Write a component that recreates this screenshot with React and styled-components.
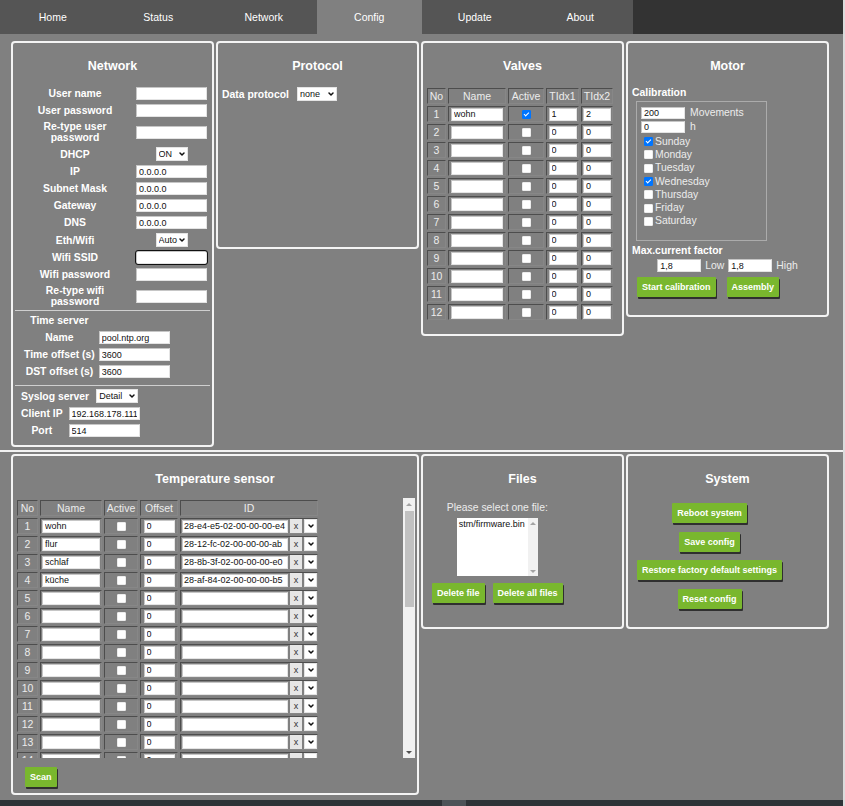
import React from 'react';
import styled, { createGlobalStyle, css } from 'styled-components';
import { ChevronDown } from 'lucide-react';

const GlobalStyle = createGlobalStyle`
  html, body {
    margin: 0;
    padding: 0;
    background: #808080;
  }
  body {
    font-family: "Liberation Sans", Arial, sans-serif;
    color: #fff;
    overflow: hidden;
  }
  *, *::before, *::after {
    box-sizing: border-box;
  }
`;

/* ---------- frame ---------- */

const Frame = styled.div`
  display: flex;
  width: 845px;
  height: 806px;
`;

const Main = styled.div`
  flex: 1;
  min-width: 0;
  display: flex;
  flex-direction: column;
`;

const EdgeLine = styled.div`
  width: 2px;
  background: #dcdcdc;
`;

const NavBar = styled.nav`
  display: flex;
  height: 34px;
  flex: none;
  background: #333;
`;

const Tab = styled.a`
  width: 105.5px;
  display: flex;
  align-items: center;
  justify-content: center;
  background: ${p => (p.$active ? '#808080' : '#555')};
  color: #fff;
  font-size: 10.5px;
  text-decoration: none;
`;

const Content = styled.main`
  flex: 1;
  padding-top: 7px;
  background: #808080;
  overflow: hidden;
`;

const PanelRow = styled.div`
  display: flex;
  align-items: flex-start;
  gap: 2px;
  padding-left: 11px;
`;

const Divider = styled.hr`
  border: 0;
  height: 2px;
  margin: 3px 0 2px;
  background: #f2f2f2;
`;

const BottomBar = styled.div`
  height: 6px;
  flex: none;
  padding-left: 442px;
  background: #2e3337;
`;

const BarThumb = styled.div`
  width: 24px;
  height: 100%;
  background: #4d5358;
`;

/* ---------- panels ---------- */

const Panel = styled.section`
  flex: none;
  width: ${p => p.$w || 203}px;
  min-height: ${p => p.$h}px;
  padding: 0 2px 4px;
  border: 2px solid #f4f4f4;
  border-radius: 4px;
  display: flex;
  flex-direction: column;
  align-items: flex-start;
`;

const Title = styled.h2`
  align-self: stretch;
  margin: 16px 0 10px;
  font-size: 12.5px;
  line-height: 15px;
  font-weight: bold;
  text-align: center;
  color: #fff;
`;

const Rule = styled.hr`
  align-self: stretch;
  border: 0;
  border-top: 1px solid #cfcfcf;
  margin: ${p => p.$gap || 0}px 0 0;
`;

const FormTable = styled.table`
  border-collapse: separate;
  border-spacing: 2px;
  margin-left: ${p => p.$indent || 0}px;
`;

const Label = styled.td`
  width: ${p => (p.$w ? `${p.$w}px` : 'auto')};
  height: ${p => (p.$h ? `${p.$h}px` : 'auto')};
  padding: 1px;
  font-size: 10.4px;
  line-height: 11px;
  font-weight: bold;
  text-align: center;
  white-space: nowrap;
  color: #fff;
`;

const Field = styled.td`
  padding: 1px 1px 1px ${p => p.$padL || 1}px;
  text-align: center;
  vertical-align: middle;
  line-height: 0;
`;

const InlineField = styled.div`
  display: flex;
  align-items: center;
  gap: ${p => p.$gap || 8}px;
  margin: ${p => p.$m || '2px 0 0 2px'};
`;

const FieldName = styled.span`
  font-size: 10.4px;
  line-height: 11px;
  font-weight: bold;
  color: #fff;
  white-space: nowrap;
`;

const PlainText = styled.span`
  font-size: 10.4px;
  line-height: 12px;
  color: #ececec;
  white-space: nowrap;
`;

const TextBox = styled.input.attrs({ type: 'text', readOnly: true })`
  display: block;
  flex: none;
  width: ${p => p.$w}px;
  height: ${p => p.$h || 13}px;
  margin: ${p => (p.$left ? '0' : '0 auto')};
  padding: 0 ${p => (p.$tight ? 1 : 2)}px;
  border: 1px solid #e4e4e4;
  border-top-color: #c6c6c6;
  border-left-color: #c6c6c6;
  border-radius: ${p => (p.$focus ? '2px' : '0')};
  background: #fff;
  color: #111;
  font: 9px "Liberation Sans", Arial, sans-serif;
  outline: ${p => (p.$focus ? '1.5px solid #111' : 'none')};
`;

const SelectWrap = styled.span`
  position: relative;
  display: flex;
  width: max-content;
  margin: ${p => (p.$center ? '0 auto' : '0')};

  svg {
    position: absolute;
    right: 2px;
    top: 50%;
    transform: translateY(-50%);
    color: #111;
    pointer-events: none;
  }
`;

const SelectBox = styled.select`
  appearance: none;
  -webkit-appearance: none;
  display: block;
  width: ${p => p.$w}px;
  height: 14px;
  margin: 0;
  padding: 0 9px 0 2px;
  border: 1px solid #e4e4e4;
  border-radius: 0;
  background: #fff;
  color: #111;
  font: 9px/12px "Liberation Sans", Arial, sans-serif;
  outline: none;
`;

const Dropdown = ({ value, width, center }) => (
  <SelectWrap $center={center}>
    <SelectBox $w={width} defaultValue={value}>
      <option value={value}>{value}</option>
    </SelectBox>
    <ChevronDown size={8} strokeWidth={4.5} />
  </SelectWrap>
);

const Check = styled.input.attrs({ type: 'checkbox' })`
  appearance: none;
  -webkit-appearance: none;
  position: relative;
  display: block;
  flex: none;
  width: 9px;
  height: 9px;
  margin: ${p => (p.$center ? '0 auto' : '0')};
  background: #fff;
  border: 1px solid #ececec;
  border-radius: 1px;

  &:checked {
    background: #0075ff;
    border-color: #0075ff;
  }
  &:checked::after {
    content: '';
    position: absolute;
    left: 2px;
    top: 0;
    width: 2.5px;
    height: 5px;
    border: solid #fff;
    border-width: 0 1.5px 1.5px 0;
    transform: rotate(45deg);
  }
`;

const GreenButton = styled.button`
  flex: none;
  height: 20px;
  padding: 0 5px;
  border: 0;
  border-radius: 1px;
  background: #79b72e;
  color: #fff;
  font: bold 9px "Liberation Sans", Arial, sans-serif;
  white-space: nowrap;
  box-shadow: 1px 2px 0 #2f2f2f;
  cursor: pointer;
`;

const ButtonRow = styled.div`
  display: flex;
  gap: ${p => p.$gap || 8}px;
  margin: ${p => p.$m || '0'};
`;

/* ---------- scroll bars ---------- */

const Track = styled.div`
  flex: none;
  width: ${p => p.$w}px;
  display: flex;
  flex-direction: column;
  background: #f1f1f1;
`;

const Arrow = styled.div`
  flex: none;
  height: ${p => p.$size}px;
  display: flex;
  align-items: center;
  justify-content: center;
  margin-top: ${p => (p.$down ? 'auto' : '0')};
`;

const Thumb = styled.div`
  flex: none;
  height: ${p => p.$h}px;
  margin: 1px 1px 0 2px;
  background: #c1c1c1;
`;

const ScrollBar = ({ width, thumb }) => (
  <Track $w={width}>
    <Arrow $size={width}>
      <svg width="6" height="3" viewBox="0 0 6 3">
        <polygon points="0,3 3,0 6,3" fill="#a3a3a3" />
      </svg>
    </Arrow>
    {thumb ? <Thumb $h={thumb} /> : null}
    <Arrow $size={width} $down>
      <svg width="6" height="3" viewBox="0 0 6 3">
        <polygon points="0,0 6,0 3,3" fill={thumb ? '#505050' : '#a3a3a3'} />
      </svg>
    </Arrow>
  </Track>
);

/* ---------- grid tables ---------- */

const cellBorder = css`
  border: 1px solid;
  border-color: #4d4d4d #878787 #878787 #4d4d4d;
`;

const GridTable = styled.table`
  border-collapse: separate;
  border-spacing: 2px;
  margin-top: ${p => p.$mt || 0}px;
  font-size: 10.5px;
  color: #ececec;
`;

const HeadCell = styled.th`
  width: ${p => p.$w}px;
  height: 16px;
  padding: 0;
  font-weight: normal;
  line-height: 12px;
  ${cellBorder}
`;

const Cell = styled.td`
  height: 16px;
  padding: 0;
  text-align: center;
  line-height: 12px;
  ${cellBorder}
`;

const IdGroup = styled.div`
  display: flex;
  align-items: center;
  gap: 2px;
  padding-left: 1px;
`;

const ClearButton = styled.button`
  flex: none;
  width: 12px;
  height: 14px;
  padding: 0;
  border: 0;
  background: #e6e6e6;
  color: #333;
  font: 9px/14px "Liberation Sans", Arial, sans-serif;
`;

const ScrollFrame = styled.div`
  display: flex;
  width: 400px;
  height: 260px;
  margin-top: 1px;
`;

const ScrollViewport = styled.div`
  flex: 1;
  overflow: hidden;
`;

const ScanButton = styled(GreenButton)`
  margin: 9px 0 0 10px;
`;

/* ---------- motor ---------- */

const SubHeading = styled.div`
  margin: ${p => p.$mt}px 0 0 2px;
  font-size: 10.4px;
  line-height: 11px;
  font-weight: bold;
  color: #fff;
`;

const CalibrationBox = styled.fieldset`
  width: 131px;
  height: 140px;
  margin: 3px 0 0 6px;
  padding: 5px 3px 0 4px;
  border: 1px solid #ababab;
  min-width: 0;
`;

const SettingRow = styled.div`
  display: flex;
  align-items: center;
  gap: 5px;
  height: 12px;
  margin-bottom: 2px;
`;

const DayRow = styled.label`
  display: flex;
  align-items: center;
  gap: 2px;
  height: 13.3px;
  padding-left: 3px;
`;

const FactorRow = styled.div`
  align-self: stretch;
  display: flex;
  justify-content: center;
  align-items: center;
  gap: 4px;
  margin-top: 3.5px;
`;

/* ---------- files / system ---------- */

const FilePicker = styled.div`
  display: flex;
  flex-direction: column;
  align-items: center;
  margin-left: 7px;
`;

const Caption = styled.div`
  margin-top: 5px;
  font-size: 10.4px;
  line-height: 12px;
  color: #ececec;
`;

const ListBox = styled.div`
  display: flex;
  width: 81px;
  height: 58px;
  margin-top: 4px;
  background: #fff;
`;

const ListOptions = styled.div`
  flex: 1;
  padding: 1px 2px;
  color: #111;
  font-size: 9px;
  line-height: 11px;
  white-space: nowrap;
  overflow: hidden;
`;

const ButtonStack = styled.div`
  display: flex;
  flex-direction: column;
  align-items: center;
  gap: 8.5px;
  margin: 6px 0 0 7px;
`;

/* ---------- data ---------- */

const tabs = ['Home', 'Status', 'Network', 'Config', 'Update', 'About'];

const networkRows = [
  { label: ['User name'] },
  { label: ['User password'] },
  { label: ['Re-type user', 'password'] },
  { label: ['DHCP'], select: 'ON' },
  { label: ['IP'], value: '0.0.0.0' },
  { label: ['Subnet Mask'], value: '0.0.0.0' },
  { label: ['Gateway'], value: '0.0.0.0' },
  { label: ['DNS'], value: '0.0.0.0' },
  { label: ['Eth/Wifi'], select: 'Auto' },
  { label: ['Wifi SSID'], focus: true },
  { label: ['Wifi password'] },
  { label: ['Re-type wifi', 'password'] },
];

const timeRows = [
  { label: 'Name', value: 'pool.ntp.org' },
  { label: 'Time offset (s)', value: '3600' },
  { label: 'DST offset (s)', value: '3600' },
];

const valves = Array.from({ length: 12 }, (_, i) =>
  i === 0
    ? { name: 'wohn', active: true, t1: '1', t2: '2' }
    : { name: '', active: false, t1: '0', t2: '0' }
);

const knownSensors = [
  { name: 'wohn', id: '28-e4-e5-02-00-00-00-e4' },
  { name: 'flur', id: '28-12-fc-02-00-00-00-ab' },
  { name: 'schlaf', id: '28-8b-3f-02-00-00-00-e0' },
  { name: 'küche', id: '28-af-84-02-00-00-00-b5' },
];

// rows that fit the visible part of the scroll box
const sensors = Array.from({ length: 14 }, (_, i) => knownSensors[i] || { name: '', id: '' });

const days = [
  { day: 'Sunday', on: true },
  { day: 'Monday', on: false },
  { day: 'Tuesday', on: false },
  { day: 'Wednesday', on: true },
  { day: 'Thursday', on: false },
  { day: 'Friday', on: false },
  { day: 'Saturday', on: false },
];

/* ---------- sections ---------- */

const NetworkPanel = () => (
  <Panel $h={406}>
    <Title>Network</Title>
    <FormTable>
      <tbody>
        {networkRows.map(row => (
          <tr key={row.label.join(' ')}>
            <Label $w={116}>
              {row.label.map((line, i) => (
                <React.Fragment key={line}>
                  {i > 0 && <br />}
                  {line}
                </React.Fragment>
              ))}
            </Label>
            <Field>
              {row.select ? (
                <Dropdown value={row.select} width={32} center />
              ) : (
                <TextBox $w={71} $focus={row.focus} value={row.value || ''} />
              )}
            </Field>
          </tr>
        ))}
      </tbody>
    </FormTable>
    <Rule />
    <FormTable $indent={6}>
      <tbody>
        <tr>
          <Label $h={15}>Time server</Label>
          <Field />
        </tr>
        {timeRows.map(row => (
          <tr key={row.label}>
            <Label>{row.label}</Label>
            <Field>
              <TextBox $w={71} value={row.value} />
            </Field>
          </tr>
        ))}
      </tbody>
    </FormTable>
    <Rule $gap={4} />
    <FormTable $indent={3}>
      <tbody>
        <tr>
          <Field colSpan={2}>
            <InlineField $gap={7} $m="0">
              <FieldName>Syslog server</FieldName>
              <Dropdown value="Detail" width={42} />
            </InlineField>
          </Field>
        </tr>
        <tr>
          <Label>Client IP</Label>
          <Field $padL={3}>
            <TextBox $w={71} value="192.168.178.111" />
          </Field>
        </tr>
        <tr>
          <Label>Port</Label>
          <Field $padL={3}>
            <TextBox $w={71} value="514" />
          </Field>
        </tr>
      </tbody>
    </FormTable>
  </Panel>
);

const ProtocolPanel = () => (
  <Panel $h={208}>
    <Title>Protocol</Title>
    <InlineField $m="3px 0 0 2px">
      <FieldName>Data protocol</FieldName>
      <Dropdown value="none" width={40} />
    </InlineField>
  </Panel>
);

const ValvesPanel = () => (
  <Panel $h={295}>
    <Title>Valves</Title>
    <GridTable $mt={2}>
      <thead>
        <tr>
          <HeadCell $w={19}>No</HeadCell>
          <HeadCell $w={58}>Name</HeadCell>
          <HeadCell $w={36}>Active</HeadCell>
          <HeadCell $w={33}>TIdx1</HeadCell>
          <HeadCell $w={32}>TIdx2</HeadCell>
        </tr>
      </thead>
      <tbody>
        {valves.map((v, i) => (
          <tr key={i}>
            <Cell>{i + 1}</Cell>
            <Cell>
              <TextBox $w={52} value={v.name} />
            </Cell>
            <Cell>
              <Check $center defaultChecked={v.active} />
            </Cell>
            <Cell>
              <TextBox $w={28} value={v.t1} />
            </Cell>
            <Cell>
              <TextBox $w={28} value={v.t2} />
            </Cell>
          </tr>
        ))}
      </tbody>
    </GridTable>
  </Panel>
);

const MotorPanel = () => (
  <Panel $h={276}>
    <Title>Motor</Title>
    <SubHeading $mt={3}>Calibration</SubHeading>
    <CalibrationBox>
      <SettingRow>
        <TextBox $w={44} $h={12} $left value="200" />
        <PlainText>Movements</PlainText>
      </SettingRow>
      <SettingRow>
        <TextBox $w={44} $h={12} $left value="0" />
        <PlainText>h</PlainText>
      </SettingRow>
      {days.map(d => (
        <DayRow key={d.day}>
          <Check defaultChecked={d.on} />
          <PlainText>{d.day}</PlainText>
        </DayRow>
      ))}
    </CalibrationBox>
    <SubHeading $mt={3.5}>Max.current factor</SubHeading>
    <FactorRow>
      <TextBox $w={44} $left value="1,8" />
      <PlainText>Low</PlainText>
      <TextBox $w={44} $left value="1,8" />
      <PlainText>High</PlainText>
    </FactorRow>
    <ButtonRow $gap={11} $m="5px 0 0 7px">
      <GreenButton>Start calibration</GreenButton>
      <GreenButton>Assembly</GreenButton>
    </ButtonRow>
  </Panel>
);

const TemperaturePanel = () => (
  <Panel $w={408} $h={341}>
    <Title>Temperature sensor</Title>
    <ScrollFrame>
      <ScrollViewport>
        <GridTable>
          <thead>
            <tr>
              <HeadCell $w={21}>No</HeadCell>
              <HeadCell $w={62}>Name</HeadCell>
              <HeadCell $w={34}>Active</HeadCell>
              <HeadCell $w={38}>Offset</HeadCell>
              <HeadCell $w={136}>ID</HeadCell>
            </tr>
          </thead>
          <tbody>
            {sensors.map((s, i) => (
              <tr key={i}>
                <Cell>{i + 1}</Cell>
                <Cell>
                  <TextBox $w={58} value={s.name} />
                </Cell>
                <Cell>
                  <Check $center />
                </Cell>
                <Cell>
                  <TextBox $w={31} value="0" />
                </Cell>
                <Cell>
                  <IdGroup>
                    <TextBox $w={106} $left $tight value={s.id} />
                    <ClearButton>x</ClearButton>
                    <Dropdown value="" width={12} />
                  </IdGroup>
                </Cell>
              </tr>
            ))}
          </tbody>
        </GridTable>
      </ScrollViewport>
      <ScrollBar width={12} thumb={96} />
    </ScrollFrame>
    <ScanButton>Scan</ScanButton>
  </Panel>
);

const FilesPanel = () => (
  <Panel $h={175}>
    <Title>Files</Title>
    <FilePicker>
      <Caption>Please select one file:</Caption>
      <ListBox role="listbox">
        <ListOptions>
          <div role="option">stm/firmware.bin</div>
        </ListOptions>
        <ScrollBar width={10} />
      </ListBox>
      <ButtonRow $m="7px 0 0">
        <GreenButton>Delete file</GreenButton>
        <GreenButton>Delete all files</GreenButton>
      </ButtonRow>
    </FilePicker>
  </Panel>
);

const SystemPanel = () => (
  <Panel $h={175}>
    <Title>System</Title>
    <ButtonStack>
      <GreenButton>Reboot system</GreenButton>
      <GreenButton>Save config</GreenButton>
      <GreenButton>Restore factory default settings</GreenButton>
      <GreenButton>Reset config</GreenButton>
    </ButtonStack>
  </Panel>
);

export default function App() {
  return (
    <>
      <GlobalStyle />
      <Frame>
        <Main>
          <NavBar>
            {tabs.map(t => (
              <Tab key={t} href="#" $active={t === 'Config'}>
                {t}
              </Tab>
            ))}
          </NavBar>
          <Content>
            <PanelRow>
              <NetworkPanel />
              <ProtocolPanel />
              <ValvesPanel />
              <MotorPanel />
            </PanelRow>
            <Divider />
            <PanelRow>
              <TemperaturePanel />
              <FilesPanel />
              <SystemPanel />
            </PanelRow>
          </Content>
          <BottomBar>
            <BarThumb />
          </BottomBar>
        </Main>
        <EdgeLine />
      </Frame>
    </>
  );
}
